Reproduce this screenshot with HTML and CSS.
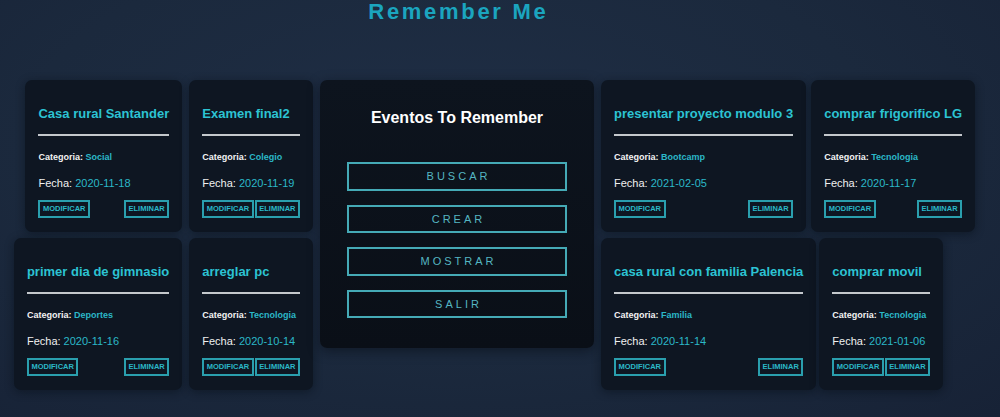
FILE: index.html
```html
<!DOCTYPE html>
<html lang="es">
<head>
<meta charset="utf-8">
<title>Remember Me</title>
<link rel="stylesheet" href="styles.css">
</head>
<body>
<div class="page">
  <div class="spacer"></div>
  <h1 class="app-title">Remember Me</h1>
  <div class="spacer"></div>

  <div class="col col-left">
    <div class="row">
      <div class="card">
        <h3 class="card-title">Casa rural Santander</h3>
        <hr class="card-rule">
        <p class="cat">Categoria: <span class="accent">Social</span></p>
        <p class="date">Fecha: <span class="accent">2020-11-18</span></p>
        <div class="actions"><button class="mini">MODIFICAR</button><button class="mini">ELIMINAR</button></div>
      </div>
      <div class="card">
        <h3 class="card-title">Examen final2</h3>
        <hr class="card-rule">
        <p class="cat">Categoria: <span class="accent">Colegio</span></p>
        <p class="date">Fecha: <span class="accent">2020-11-19</span></p>
        <div class="actions"><button class="mini">MODIFICAR</button><button class="mini">ELIMINAR</button></div>
      </div>
    </div>
    <div class="row">
      <div class="card">
        <h3 class="card-title">primer dia de gimnasio</h3>
        <hr class="card-rule">
        <p class="cat">Categoria: <span class="accent">Deportes</span></p>
        <p class="date">Fecha: <span class="accent">2020-11-16</span></p>
        <div class="actions"><button class="mini">MODIFICAR</button><button class="mini">ELIMINAR</button></div>
      </div>
      <div class="card">
        <h3 class="card-title">arreglar pc</h3>
        <hr class="card-rule">
        <p class="cat">Categoria: <span class="accent">Tecnologia</span></p>
        <p class="date">Fecha: <span class="accent">2020-10-14</span></p>
        <div class="actions"><button class="mini">MODIFICAR</button><button class="mini">ELIMINAR</button></div>
      </div>
    </div>
  </div>

  <div class="menu">
    <h2 class="menu-title">Eventos To Remember</h2>
    <button class="menu-btn">BUSCAR</button>
    <button class="menu-btn">CREAR</button>
    <button class="menu-btn">MOSTRAR</button>
    <button class="menu-btn">SALIR</button>
  </div>

  <div class="col col-right">
    <div class="row row-top">
      <div class="card">
        <h3 class="card-title">presentar proyecto modulo 3</h3>
        <hr class="card-rule">
        <p class="cat">Categoria: <span class="accent">Bootcamp</span></p>
        <p class="date">Fecha: <span class="accent">2021-02-05</span></p>
        <div class="actions"><button class="mini">MODIFICAR</button><button class="mini">ELIMINAR</button></div>
      </div>
      <div class="card">
        <h3 class="card-title">comprar frigorifico LG</h3>
        <hr class="card-rule">
        <p class="cat">Categoria: <span class="accent">Tecnologia</span></p>
        <p class="date">Fecha: <span class="accent">2020-11-17</span></p>
        <div class="actions"><button class="mini">MODIFICAR</button><button class="mini">ELIMINAR</button></div>
      </div>
    </div>
    <div class="row row-bottom">
      <div class="card">
        <h3 class="card-title">casa rural con familia Palencia</h3>
        <hr class="card-rule">
        <p class="cat">Categoria: <span class="accent">Familia</span></p>
        <p class="date">Fecha: <span class="accent">2020-11-14</span></p>
        <div class="actions"><button class="mini">MODIFICAR</button><button class="mini">ELIMINAR</button></div>
      </div>
      <div class="card">
        <h3 class="card-title">comprar movil</h3>
        <hr class="card-rule">
        <p class="cat">Categoria: <span class="accent">Tecnologia</span></p>
        <p class="date">Fecha: <span class="accent">2021-01-06</span></p>
        <div class="actions"><button class="mini">MODIFICAR</button><button class="mini">ELIMINAR</button></div>
      </div>
    </div>
  </div>
</div>
</body>
</html>
```

FILE: styles.css
```css
* { box-sizing: border-box; }

html, body {
  margin: 0;
  height: 100%;
}

body {
  font-family: "Liberation Sans", Arial, sans-serif;
  background: radial-gradient(ellipse at 45% 35%, #1f2e45 0%, #1b293d 55%, #172236 100%);
  color: #ffffff;
  overflow: hidden;
}

.page {
  display: grid;
  grid-template-columns: 313px 274px 1fr;
  column-gap: 7px;
  align-items: start;
}

.app-title {
  margin: -1px 0 0;
  height: 81px;
  text-align: center;
  font-size: 22px;
  line-height: 25px;
  font-weight: 700;
  letter-spacing: 2.7px;
  text-indent: 2.7px;
  color: #1ba5bf;
}

.col {
  display: flex;
  flex-direction: column;
  gap: 6px;
}

.row {
  display: flex;
  align-items: stretch;
}

.col-left .row {
  justify-content: flex-end;
  gap: 7px;
}

.col-right .row { justify-content: flex-start; }
.row-top { gap: 5px; }
.row-bottom { gap: 3px; }

.card {
  background: #0e1622;
  border-radius: 7px;
  padding: 0 13px 14px;
  box-shadow: 0 2px 10px rgba(5, 10, 18, 0.45);
}

.card-title {
  margin: 26px 0 13px;
  font-size: 13px;
  line-height: 15px;
  font-weight: 700;
  color: #2cc3d3;
  white-space: nowrap;
}

.card-rule {
  margin: 0;
  border: 0;
  height: 2px;
  background: #c4c8cc;
}

.cat {
  margin: 16px 0 0;
  font-size: 9px;
  line-height: 10px;
  font-weight: 700;
  color: #f2f2f2;
}

.date {
  margin: 15px 0 0;
  font-size: 11px;
  line-height: 12px;
  color: #f0f0f0;
}

.accent { color: #2bb8c8; }

.actions {
  margin-top: 11px;
  display: flex;
  justify-content: space-between;
  gap: 1px;
}

.mini {
  font-family: "Liberation Sans", Arial, sans-serif;
  font-size: 7.5px;
  line-height: 8px;
  font-weight: 700;
  color: #2bb8c8;
  background: transparent;
  border: 2px solid #2a9fae;
  padding: 3px 2.5px;
  margin: 0;
}

.menu {
  background: linear-gradient(180deg, #0d141e 0%, #0a0f17 100%);
  border-radius: 7px;
  padding: 29px 27px 30px;
  box-shadow: 0 3px 12px rgba(5, 10, 18, 0.5);
  display: flex;
  flex-direction: column;
}

.menu-title {
  margin: 0 0 35px;
  font-size: 16px;
  line-height: 18px;
  font-weight: 700;
  text-align: center;
  color: #ffffff;
}

.menu-btn {
  height: 28.5px;
  margin: 0 0 14px;
  background: transparent;
  border: 2px solid #45aab6;
  color: #55b6c2;
  font-family: "Liberation Sans", Arial, sans-serif;
  font-size: 11px;
  letter-spacing: 3px;
  text-indent: 3px;
  padding: 0;
}

.menu-btn:last-child { margin-bottom: 0; }

.spacer { height: 1px; }
```
